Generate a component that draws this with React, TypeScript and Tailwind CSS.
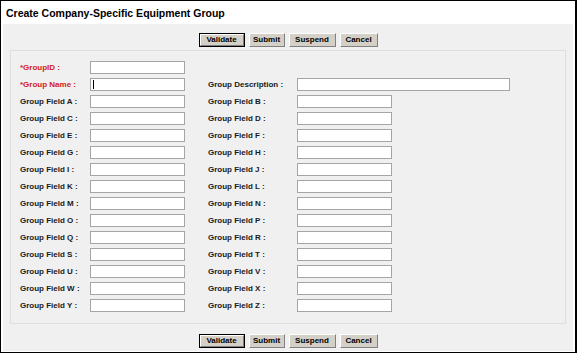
const LEFT = ['A', 'C', 'E', 'G', 'I', 'K', 'M', 'O', 'Q', 'S', 'U', 'W', 'Y']
const RIGHT = ['B', 'D', 'F', 'H', 'J', 'L', 'N', 'P', 'R', 'T', 'V', 'X', 'Z']

const BTN =
  'flex items-center justify-center h-[14px] bg-[#d4d0c8] text-[8px] font-bold leading-none text-black border border-t-white border-l-white border-b-[#808080] border-r-[#808080]'

function Buttons() {
  return (
    <div className="h-[14px] flex justify-center items-center gap-[4px]">
      <div className="flex h-[14px] w-[46px] border border-black">
        <span className="flex-1 flex items-center justify-center bg-[#d4d0c8] text-[8px] font-bold leading-none text-black border border-t-white border-l-white border-b-[#808080] border-r-[#808080]">
          Validate
        </span>
      </div>
      <span className={BTN + ' w-[36px]'}>Submit</span>
      <span className={BTN + ' w-[47px]'}>Suspend</span>
      <span className={BTN + ' w-[38px]'}>Cancel</span>
    </div>
  )
}

function Field({ caret = false, wide = false }: { caret?: boolean; wide?: boolean }) {
  return (
    <div
      className={`h-[13px] ${wide ? 'w-[213px]' : 'w-[95px]'} bg-white border border-[#a5a5a5] flex items-center`}
    >
      {caret && <span className="ml-[2px] w-px h-[9px] bg-black" />}
    </div>
  )
}

function Label({ text, red = false, w }: { text: string; red?: boolean; w: string }) {
  return (
    <span className={`${w} text-[8px] font-bold leading-none ${red ? 'text-[#d41a1a]' : 'text-[#1a1a1a]'}`}>
      {text}
    </span>
  )
}

export default function App() {
  return (
    <div
      className="w-[577px] h-[353px] bg-white border border-black border-r-2 flex flex-col"
      style={{ fontFamily: '"Liberation Sans", Arial, sans-serif' }}
    >
      <div className="h-[23px] shrink-0 pl-[5px] pt-[3px] flex items-center text-[10.5px] font-bold text-black">
        Create Company-Specific Equipment Group
      </div>
      <div className="flex-1 mx-[2px] mb-[1px] bg-[#f0f0f0] flex flex-col pt-[9px]">
        <Buttons />
        <div className="mx-[7px] mt-[3px] h-[274px] border border-[#dedede] pl-[9px] pt-[10px] flex flex-col gap-[4px]">
          <div className="h-[13px] flex items-center">
            <Label text="*GroupID :" red w="w-[70px]" />
            <Field />
          </div>
          <div className="h-[13px] flex items-center">
            <Label text="*Group Name :" red w="w-[70px]" />
            <Field caret />
            <span className="w-[23px]" />
            <Label text="Group Description :" w="w-[89px]" />
            <Field wide />
          </div>
          {LEFT.map((l, i) => (
            <div key={l} className="h-[13px] flex items-center">
              <Label text={`Group Field ${l} :`} w="w-[70px]" />
              <Field />
              <span className="w-[23px]" />
              <Label text={`Group Field ${RIGHT[i]} :`} w="w-[89px]" />
              <Field />
            </div>
          ))}
        </div>
        <div className="mt-[10px]">
          <Buttons />
        </div>
      </div>
    </div>
  )
}
